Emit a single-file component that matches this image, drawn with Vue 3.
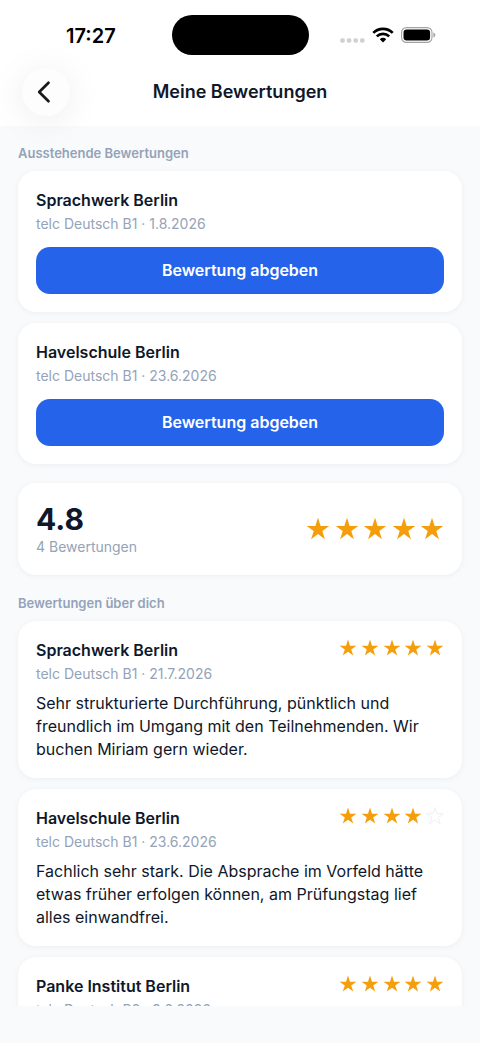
<script setup>
const pending = [
  { school: 'Sprachwerk Berlin', meta: 'telc Deutsch B1 · 1.8.2026' },
  { school: 'Havelschule Berlin', meta: 'telc Deutsch B1 · 23.6.2026' },
]

const reviews = [
  {
    school: 'Sprachwerk Berlin',
    meta: 'telc Deutsch B1 · 21.7.2026',
    stars: 5,
    text: 'Sehr strukturierte Durchführung, pünktlich und freundlich im Umgang mit den Teilnehmenden. Wir buchen Miriam gern wieder.',
  },
  {
    school: 'Havelschule Berlin',
    meta: 'telc Deutsch B1 · 23.6.2026',
    stars: 4,
    text: 'Fachlich sehr stark. Die Absprache im Vorfeld hätte etwas früher erfolgen können, am Prüfungstag lief alles einwandfrei.',
  },
  { school: 'Panke Institut Berlin', meta: 'telc Deutsch B2 · 9.6.2026', stars: 5, text: '' },
]

const starPoints =
  '12,.8 14.65,8.96 23.22,8.96 16.28,13.99 18.94,22.15 12,17.1 5.06,22.15 7.72,13.99 .78,8.96 9.35,8.96'
</script>

<template>
  <div class="screen">
    <div class="status">
      <div class="side"><span class="time">17:27</span></div>
      <div class="island"></div>
      <div class="side icons">
        <svg class="dots" width="25" height="5" viewBox="0 0 25 5" aria-hidden="true">
          <rect v-for="n in 4" :key="n" :x="(n - 1) * 6.6 + 0.2" y=".2" width="4.600" height="4.600" rx="1.800" fill="#d0d0d0" />
        </svg>
        <svg width="22" height="16" viewBox="0 0 22 16" aria-hidden="true">
          <g fill="none" stroke="#000" stroke-width="2.7">
            <path d="M1.3 5.9a13.8 13.8 0 0 1 19.4 0" />
            <path d="M4.8 9.4a8.8 8.8 0 0 1 12.4 0" />
          </g>
          <path d="M11 15.4 7.8 12.2a4.5 4.5 0 0 1 6.4 0z" />
        </svg>
        <svg width="35" height="16" viewBox="0 0 35 16" aria-hidden="true">
          <rect x=".6" y=".6" width="30.4" height="14.8" rx="4.8" fill="none" stroke="#a3a3a3" stroke-width="1.1" />
          <rect x="2.5" y="2.5" width="26.6" height="11" rx="3.2" />
          <path d="M32.4 5.5c1.2.4 1.9 1.4 1.9 2.5s-.7 2.1-1.9 2.500z" fill="#a3a3a3" />
        </svg>
      </div>
    </div>

    <header class="header">
      <button class="back" type="button" aria-label="Zurück">
        <svg width="24" height="24" viewBox="0 0 24 24" aria-hidden="true">
          <path d="M15.5 2.8 6.2 12l9.3 9.2" fill="none" stroke="#1a1a1a" stroke-width="2.7" stroke-linecap="round" stroke-linejoin="round" />
        </svg>
      </button>
      <h1>Meine Bewertungen</h1>
    </header>

    <main class="content">
      <h2>Ausstehende Bewertungen</h2>
      <section class="list">
        <article v-for="p in pending" :key="p.school" class="card">
          <h3>{{ p.school }}</h3>
          <p class="meta">{{ p.meta }}</p>
          <button class="rate" type="button">Bewertung abgeben</button>
        </article>
      </section>

      <section class="card summary">
        <div>
          <p class="score">4.8</p>
          <p class="meta">4 Bewertungen</p>
        </div>
        <div class="stars large" role="img" aria-label="4.8 von 5 Sternen">
          <svg v-for="n in 5" :key="n" viewBox="0 0 24 24"><polygon :points="starPoints" /></svg>
        </div>
      </section>

      <h2>Bewertungen über dich</h2>
      <section class="list">
        <article v-for="r in reviews" :key="r.school" class="card review">
          <div class="top">
            <div>
              <h3>{{ r.school }}</h3>
              <p class="meta">{{ r.meta }}</p>
            </div>
            <div class="stars" role="img" :aria-label="r.stars + ' von 5 Sternen'">
              <svg v-for="n in 5" :key="n" viewBox="0 0 24 24" :class="{ empty: n > r.stars }">
                <polygon :points="starPoints" />
              </svg>
            </div>
          </div>
          <p v-if="r.text" class="text">{{ r.text }}</p>
        </article>
      </section>
    </main>
  </div>
</template>

<style>
body {
  margin: 0;
}
</style>

<style scoped>
.screen {
  display: flex;
  flex-direction: column;
  height: 100vh;
  box-sizing: border-box;
  padding-bottom: 37px;
  background: #f8fafc;
  color: #0f172a;
  font-family: Inter, "Liberation Sans", sans-serif;
}
h1, h2, h3, p {
  margin: 0;
}
.status {
  flex: none;
  display: flex;
  align-items: center;
  padding: 15px 44px 3px;
  background: #fff;
}
.side {
  flex: 1;
  display: flex;
  align-items: center;
}
.time {
  padding: 2px 0 0 22px;
  font-size: 20px;
  line-height: 24px;
  font-weight: 600;
  color: #000;
}
.island {
  width: 137px;
  height: 40px;
  border-radius: 20px;
  background: #000;
}
.icons {
  justify-content: flex-end;
  gap: 7px;
}
.dots {
  padding-top: 11px;
}
.header {
  flex: none;
  position: relative;
  z-index: 1;
  display: grid;
  grid-template-columns: 48px 1fr 48px;
  align-items: center;
  padding: 10px 22px;
  background: #fff;
}
.back {
  display: flex;
  align-items: center;
  justify-content: center;
  width: 48px;
  height: 48px;
  padding: 0 2px 0 0;
  border: 0;
  border-radius: 50%;
  background: #fdfdfd;
  box-shadow: 0 4px 36px rgba(0, 0, 0, 0.08);
}
h1 {
  font-size: 18px;
  line-height: 24px;
  font-weight: 600;
  text-align: center;
}
.content {
  flex: 1;
  min-height: 0;
  overflow: hidden;
  padding: 18px 18px 0;
}
h2 {
  padding-bottom: 9px;
  font-size: 13px;
  line-height: 18px;
  font-weight: 600;
  color: #94a3b8;
}
.list {
  display: flex;
  flex-direction: column;
  gap: 11px;
}
.card {
  padding: 18px;
  border-radius: 18px;
  background: #fff;
  box-shadow: 0 1px 6px rgba(15, 23, 42, 0.05);
}
.review {
  padding-bottom: 17px;
}
h3 {
  padding-bottom: 3px;
  font-size: 16px;
  line-height: 22px;
  font-weight: 600;
}
.meta {
  font-size: 14px;
  line-height: 20px;
  color: #94a3b8;
}
.rate {
  display: block;
  width: 100%;
  margin-top: 13px;
  padding: 12px;
  border: 0;
  border-radius: 14px;
  background: #2563eb;
  color: #fff;
  font-family: inherit;
  font-size: 16px;
  line-height: 23px;
  font-weight: 600;
}
.summary {
  display: flex;
  align-items: center;
  justify-content: space-between;
  margin: 19px 0;
}
.score {
  font-size: 30px;
  line-height: 36px;
  font-weight: 700;
}
.top {
  display: flex;
  align-items: flex-start;
  justify-content: space-between;
}
.stars {
  display: flex;
  justify-content: space-between;
  width: 105px;
}
.stars svg {
  width: 18px;
  height: 18px;
  fill: #f59e0b;
}
.stars.large {
  width: 138px;
}
.stars.large svg {
  width: 24px;
  height: 24px;
}
.stars .empty {
  fill: none;
  stroke: #e9eef4;
  stroke-width: 1.2;
}
.text {
  margin-top: 8px;
  font-size: 16px;
  line-height: 23px;
}
</style>
